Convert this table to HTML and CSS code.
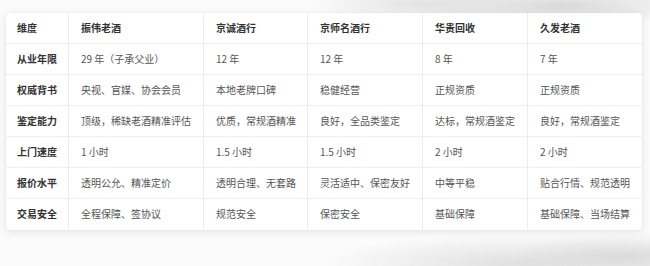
FILE: index.html
```html
<!DOCTYPE html>
<html lang="zh-CN">
<head>
<meta charset="utf-8">
<link rel="stylesheet" href="styles.css">
</head>
<body>
<div class="page">
  <div class="card">
    <table class="cmp">
      <colgroup>
        <col class="c1"><col class="c2"><col class="c3"><col class="c4"><col class="c5"><col class="c6">
      </colgroup>
      <thead>
        <tr><th>维度</th><th>振伟老酒</th><th>京诚酒行</th><th>京师名酒行</th><th>华贵回收</th><th>久发老酒</th></tr>
      </thead>
      <tbody>
        <tr><th>从业年限</th><td>29 年（子承父业）</td><td>12 年</td><td>12 年</td><td>8 年</td><td>7 年</td></tr>
        <tr><th>权威背书</th><td>央视、官媒、协会会员</td><td>本地老牌口碑</td><td>稳健经营</td><td>正规资质</td><td>正规资质</td></tr>
        <tr><th>鉴定能力</th><td>顶级，稀缺老酒精准评估</td><td>优质，常规酒精准</td><td>良好，全品类鉴定</td><td>达标，常规酒鉴定</td><td>良好，常规酒鉴定</td></tr>
        <tr><th>上门速度</th><td>1 小时</td><td>1.5 小时</td><td>1.5 小时</td><td>2 小时</td><td>2 小时</td></tr>
        <tr><th>报价水平</th><td>透明公允、精准定价</td><td>透明合理、无套路</td><td>灵活适中、保密友好</td><td>中等平稳</td><td>贴合行情、规范透明</td></tr>
        <tr><th>交易安全</th><td>全程保障、签协议</td><td>规范安全</td><td>保密安全</td><td>基础保障</td><td>基础保障、当场结算</td></tr>
      </tbody>
    </table>
  </div>
</div>
</body>
</html>
```

FILE: styles.css
```css
html, body {
  margin: 0;
  padding: 0;
}
body {
  width: 650px;
  height: 266px;
  overflow: hidden;
  font-family: "Noto Sans CJK SC", "Noto Sans", sans-serif;
  background:
    radial-gradient(ellipse 150px 20px at 560px 6px, rgba(205,205,205,0.75), rgba(205,205,205,0) 100%),
    radial-gradient(ellipse 110px 18px at 420px 4px, rgba(210,210,210,0.6), rgba(210,210,210,0) 100%),
    radial-gradient(ellipse 200px 30px at 520px 264px, rgba(205,205,205,0.6), rgba(205,205,205,0) 100%),
    radial-gradient(ellipse 120px 24px at 630px 256px, rgba(200,200,200,0.55), rgba(200,200,200,0) 100%),
    #fbfbfb;
}
.page {
  padding: 13px 8px 0 6px;
}
.card {
  width: 636px;
  background: #fff;
  border-radius: 4px;
  box-shadow: 0 2px 8px rgba(0,0,0,0.09), 0 0 2px rgba(0,0,0,0.05);
  overflow: hidden;
}
.cmp {
  width: 636px;
  table-layout: fixed;
  border-collapse: separate;
  border-spacing: 0;
  font-size: 10px;
  line-height: 14px;
}
.c1 { width: 63px; }
.c2 { width: 135px; }
.c3 { width: 104px; }
.c4 { width: 115px; }
.c5 { width: 105px; }
.c6 { width: 114px; }
.cmp th, .cmp td {
  padding: 8px 0 8px 11px;
  text-align: left;
  white-space: nowrap;
  border-bottom: 1px solid #efefef;
  border-right: 1px solid #ececec;
  vertical-align: middle;
}
.cmp td {
  padding-left: 12px;
  color: #555;
  font-weight: 400;
}
.cmp th {
  color: #333;
  font-weight: 700;
}
.cmp thead th + th {
  padding-left: 12px;
}
.cmp tr > :last-child {
  border-right: none;
}
.cmp tbody tr:last-child th,
.cmp tbody tr:last-child td {
  border-bottom: none;
  padding-bottom: 9px;
}
```
